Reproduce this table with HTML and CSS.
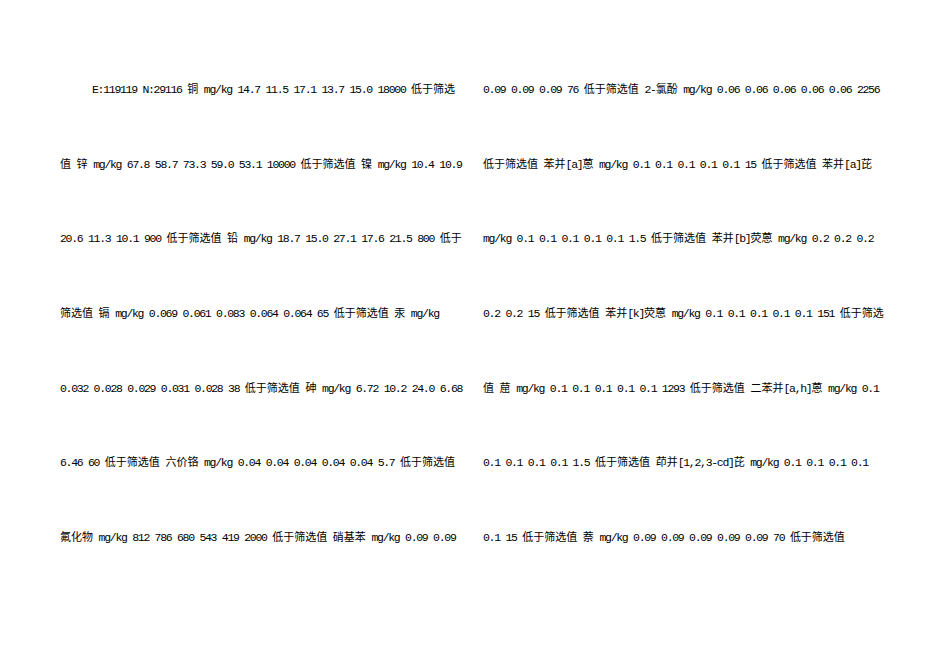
FILE: index.html
```html
<!DOCTYPE html>
<html lang="zh-CN">
<head>
    <meta charset="UTF-8">
    <meta name="viewport" content="width=device-width, initial-scale=1.0">
    <title>土壤检测结果</title>
    <link rel="stylesheet" href="styles.css">
</head>
<body>
    <div class="page">
        <div class="column">
            <div class="line first">E:119119 N:29116 铜 mg/kg 14.7 11.5 17.1 13.7 15.0 18000 低于筛选</div>
            <div class="line">值 锌 mg/kg 67.8 58.7 73.3 59.0 53.1 10000 低于筛选值 镍 mg/kg 10.4 10.9</div>
            <div class="line">20.6 11.3 10.1 900 低于筛选值 铅 mg/kg 18.7 15.0 27.1 17.6 21.5 800 低于</div>
            <div class="line">筛选值 镉 mg/kg 0.069 0.061 0.083 0.064 0.064 65 低于筛选值 汞 mg/kg</div>
            <div class="line">0.032 0.028 0.029 0.031 0.028 38 低于筛选值 砷 mg/kg 6.72 10.2 24.0 6.68</div>
            <div class="line">6.46 60 低于筛选值 六价铬 mg/kg 0.04 0.04 0.04 0.04 0.04 5.7 低于筛选值</div>
            <div class="line">氟化物 mg/kg 812 786 680 543 419 2000 低于筛选值 硝基苯 mg/kg 0.09 0.09</div>
        </div>
        <div class="column">
            <div class="line">0.09 0.09 0.09 76 低于筛选值 2-氯酚 mg/kg 0.06 0.06 0.06 0.06 0.06 2256</div>
            <div class="line">低于筛选值 苯并[a]蒽 mg/kg 0.1 0.1 0.1 0.1 0.1 15 低于筛选值 苯并[a]芘</div>
            <div class="line">mg/kg 0.1 0.1 0.1 0.1 0.1 1.5 低于筛选值 苯并[b]荧蒽 mg/kg 0.2 0.2 0.2</div>
            <div class="line">0.2 0.2 15 低于筛选值 苯并[k]荧蒽 mg/kg 0.1 0.1 0.1 0.1 0.1 151 低于筛选</div>
            <div class="line">值 䓛 mg/kg 0.1 0.1 0.1 0.1 0.1 1293 低于筛选值 二苯并[a,h]蒽 mg/kg 0.1</div>
            <div class="line">0.1 0.1 0.1 0.1 1.5 低于筛选值 茚并[1,2,3-cd]芘 mg/kg 0.1 0.1 0.1 0.1</div>
            <div class="line">0.1 15 低于筛选值 萘 mg/kg 0.09 0.09 0.09 0.09 0.09 70 低于筛选值</div>
        </div>
    </div>

    <script>
        // half-width latin runs, like the original document font
        document.querySelectorAll(".line").forEach(function (line) {
            const text = line.textContent.trim();
            line.innerHTML = text.replace(/[\x20-\x7e]+/g, function (run) {
                return '<span class="lat">' + run + '</span>';
            });
        });
    </script>
</body>
</html>
```

FILE: styles.css
```css
body {
    margin: 0;
    background-color: #fff;
    color: #000;
    font-family: "Noto Sans CJK SC", "Liberation Serif", serif;
    font-size: 11px;
}
.page {
    display: grid;
    grid-template-columns: 402px 402px;
    column-gap: 21px;
    padding: 51px 0 0 60px;
}
.line {
    height: 74.67px;
    line-height: 74.67px;
    white-space: nowrap;
}
.line.first {
    text-indent: 32px;
}
.lat {
    font-family: "Liberation Mono", monospace;
    font-size: 11.5px;
    letter-spacing: -1.3px;
}
```
